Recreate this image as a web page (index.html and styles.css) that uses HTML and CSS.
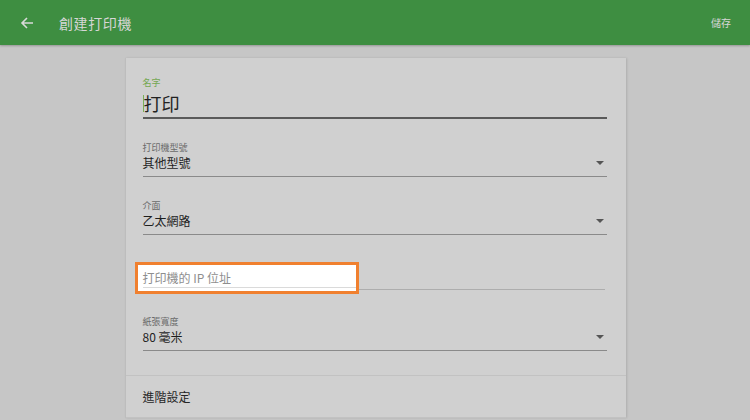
FILE: index.html
```html
<!DOCTYPE html>
<html lang="zh-Hant">
<head>
<meta charset="utf-8">
<title>創建打印機</title>
<link rel="stylesheet" href="styles.css">
</head>
<body>
<header class="appbar">
  <svg class="back" width="14" height="14" viewBox="0 0 14 14"><path d="M13 7H2M7 2L2 7l5 5" fill="none" stroke="#d9d9d9" stroke-width="1.6"/></svg>
  <h1 class="title">創建打印機</h1>
  <span class="save">儲存</span>
</header>
<main class="page">
  <section class="card">
    <div class="form">
      <div class="field name-field">
        <div class="label green">名字</div>
        <div class="value big"><span class="cursor"></span>打印</div>
      </div>
      <div class="field select">
        <div class="label">打印機型號</div>
        <div class="value">其他型號<span class="caret"></span></div>
      </div>
      <div class="field select">
        <div class="label">介面</div>
        <div class="value">乙太網路<span class="caret"></span></div>
      </div>
      <div class="field ip-field">
        <div class="spotlight">
          <div class="placeholder">打印機的 IP 位址</div>
        </div>
      </div>
      <div class="field select paper">
        <div class="label">紙張寬度</div>
        <div class="value">80 毫米<span class="caret"></span></div>
      </div>
    </div>
    <div class="advanced">進階設定</div>
  </section>
</main>
</body>
</html>
```
FILE: styles.css
```css
html, body {
  margin: 0;
  padding: 0;
}
body {
  width: 750px;
  height: 420px;
  overflow: hidden;
  background: #c6c6c6;
  font-family: "Noto Sans CJK TC", "Noto Sans", sans-serif;
  color: #1e1e1e;
}
.appbar {
  height: 45px;
  background: #3e8e41;
  display: flex;
  align-items: center;
  padding: 0 19px 0 20px;
  box-shadow: 0 1px 2px rgba(0,0,0,0.25);
  position: relative;
}
.back {
  display: block;
}
.title {
  margin: 0 0 0 25px;
  font-size: 14px;
  font-weight: 400;
  color: #d6d6d6;
  letter-spacing: 0.6px;
}
.save {
  margin-left: auto;
  font-size: 10px;
  color: #d6d6d6;
}
.page {
  display: flex;
  justify-content: center;
  padding-top: 13px;
}
.card {
  width: 500px;
  background: #d0d0d0;
  border-left: 1px solid #bdbdbd;
  box-shadow: 1px 0 2px rgba(0,0,0,0.12);
}
.form {
  padding: 19px 19px 24px 17px;
}
.field {
  position: relative;
}
.label {
  font-size: 9px;
  line-height: 12px;
  color: #6a6a6a;
}
.label.green {
  color: #74a752;
}
.value {
  font-size: 12px;
  line-height: 18px;
  display: flex;
  align-items: center;
}
.value.big {
  font-size: 18px;
  line-height: 28px;
  color: #222;
}
.cursor {
  width: 1px;
  height: 17px;
  background: #7ab058;
}
.name-field {
  border-bottom: 2px solid #5a5a5a;
}
.select {
  margin-top: 23px;
  border-bottom: 1px solid #8a8a8a;
  padding-bottom: 4px;
}
.caret {
  margin-left: auto;
  margin-right: 3px;
  width: 0;
  height: 0;
  border-left: 4px solid transparent;
  border-right: 4px solid transparent;
  border-top: 4px solid #555;
}
.ip-field {
  height: 54px;
  border-bottom: 1px solid #adadad;
  margin-right: 2px;
}
.spotlight {
  position: absolute;
  left: -8px;
  top: 27px;
  width: 224px;
  height: 32px;
  box-sizing: border-box;
  border: 3px solid #f0802f;
  background: #fff;
}
.placeholder {
  position: absolute;
  left: 5px;
  right: 0;
  top: 4px;
  height: 18px;
  font-size: 12px;
  line-height: 18px;
  color: #8e8e8e;
  border-bottom: 1px solid #dadada;
}
.select.paper {
  margin-top: 26px;
}
.advanced {
  border-top: 1px solid #c2c2c2;
  border-bottom: 1px solid #c2c2c2;
  height: 41px;
  line-height: 41px;
  padding-left: 17px;
  font-size: 12px;
  color: #262626;
}
```
